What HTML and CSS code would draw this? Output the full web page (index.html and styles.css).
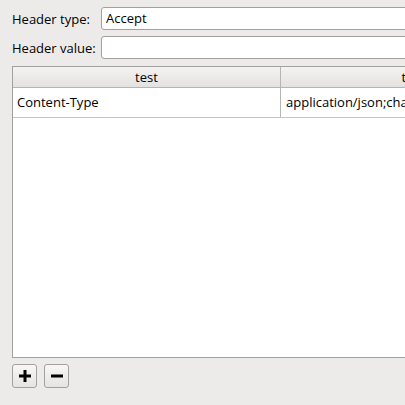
FILE: index.html
```html
<!DOCTYPE html>
<html>
<head><link rel="stylesheet" href="styles.css"></head>
<body>
<div class="form">
  <div class="row">
    <label class="lbl">Header type:</label>
    <div class="input">Accept</div>
  </div>
  <div class="row">
    <label class="lbl">Header value:</label>
    <div class="input"></div>
  </div>
</div>
<div class="table">
  <div class="thead">
    <div class="th c1">test</div>
    <div class="th c2">test</div>
  </div>
  <div class="tr">
    <div class="td c1">Content-Type</div>
    <div class="td c2">application/json;charset=UTF-8</div>
  </div>
</div>
<div class="buttons">
  <button class="btn"><svg width="12" height="12" viewBox="0 0 12 12"><path d="M4.5 0h3v4.5h4.5v3h-4.5v4.5h-3v-4.5h-4.5v-3h4.5z" fill="#000"/></svg></button>
  <button class="btn"><svg width="12" height="12" viewBox="0 0 12 12"><rect x="0" y="4.5" width="12" height="3" fill="#000"/></svg></button>
</div>
</body>
</html>
```
FILE: styles.css
```css
html, body { margin: 0; padding: 0; }
body {
  width: 405px; height: 405px; overflow: hidden;
  background: #edebe9;
  font-family: "Open Sans", "DejaVu Sans", sans-serif;
  font-size: 13px;
  color: #000;
}
.form { padding: 7px 0 0 12px; display: flex; flex-direction: column; gap: 6px; }
.row { display: flex; align-items: center; height: 23px; }
.lbl { width: 89px; flex: none; }
.input {
  box-sizing: border-box; height: 23px; width: 320px; flex: none;
  background: #fff; border: 1px solid #a4a19d; border-radius: 3px;
  padding: 0 4px; line-height: 21px;
}
.table {
  margin: 7px 0 0 12px; box-sizing: border-box; height: 292px; width: 393px;
  background: #fff; border: 1px solid #a4a19d; border-right: none;
  overflow: hidden;
}
.thead { display: flex; height: 20px; background: linear-gradient(#f4f3f2, #e4e2e0); border-bottom: 1px solid #b8b5b1; }
.th { text-align: center; line-height: 20px; box-sizing: border-box; }
.c1 { width: 268px; flex: none; box-sizing: border-box; border-right: 1px solid #b8b5b1; }
.c2 { width: 264px; flex: none; white-space: nowrap; overflow: hidden; }
.tr { display: flex; height: 29px; border-bottom: 1px solid #c8c6c3; }
.td { line-height: 29px; padding-left: 4px; box-sizing: border-box; }
.td.c2 { padding-left: 5px; }
.buttons { display: flex; gap: 7px; margin: 6px 0 0 12px; }
.btn {
  width: 25px; height: 24px; box-sizing: border-box; padding: 0;
  border: 1px solid #a4a19d; border-radius: 3px;
  background: linear-gradient(#f8f7f6, #e6e4e2);
  display: flex; align-items: center; justify-content: center;
}
```
